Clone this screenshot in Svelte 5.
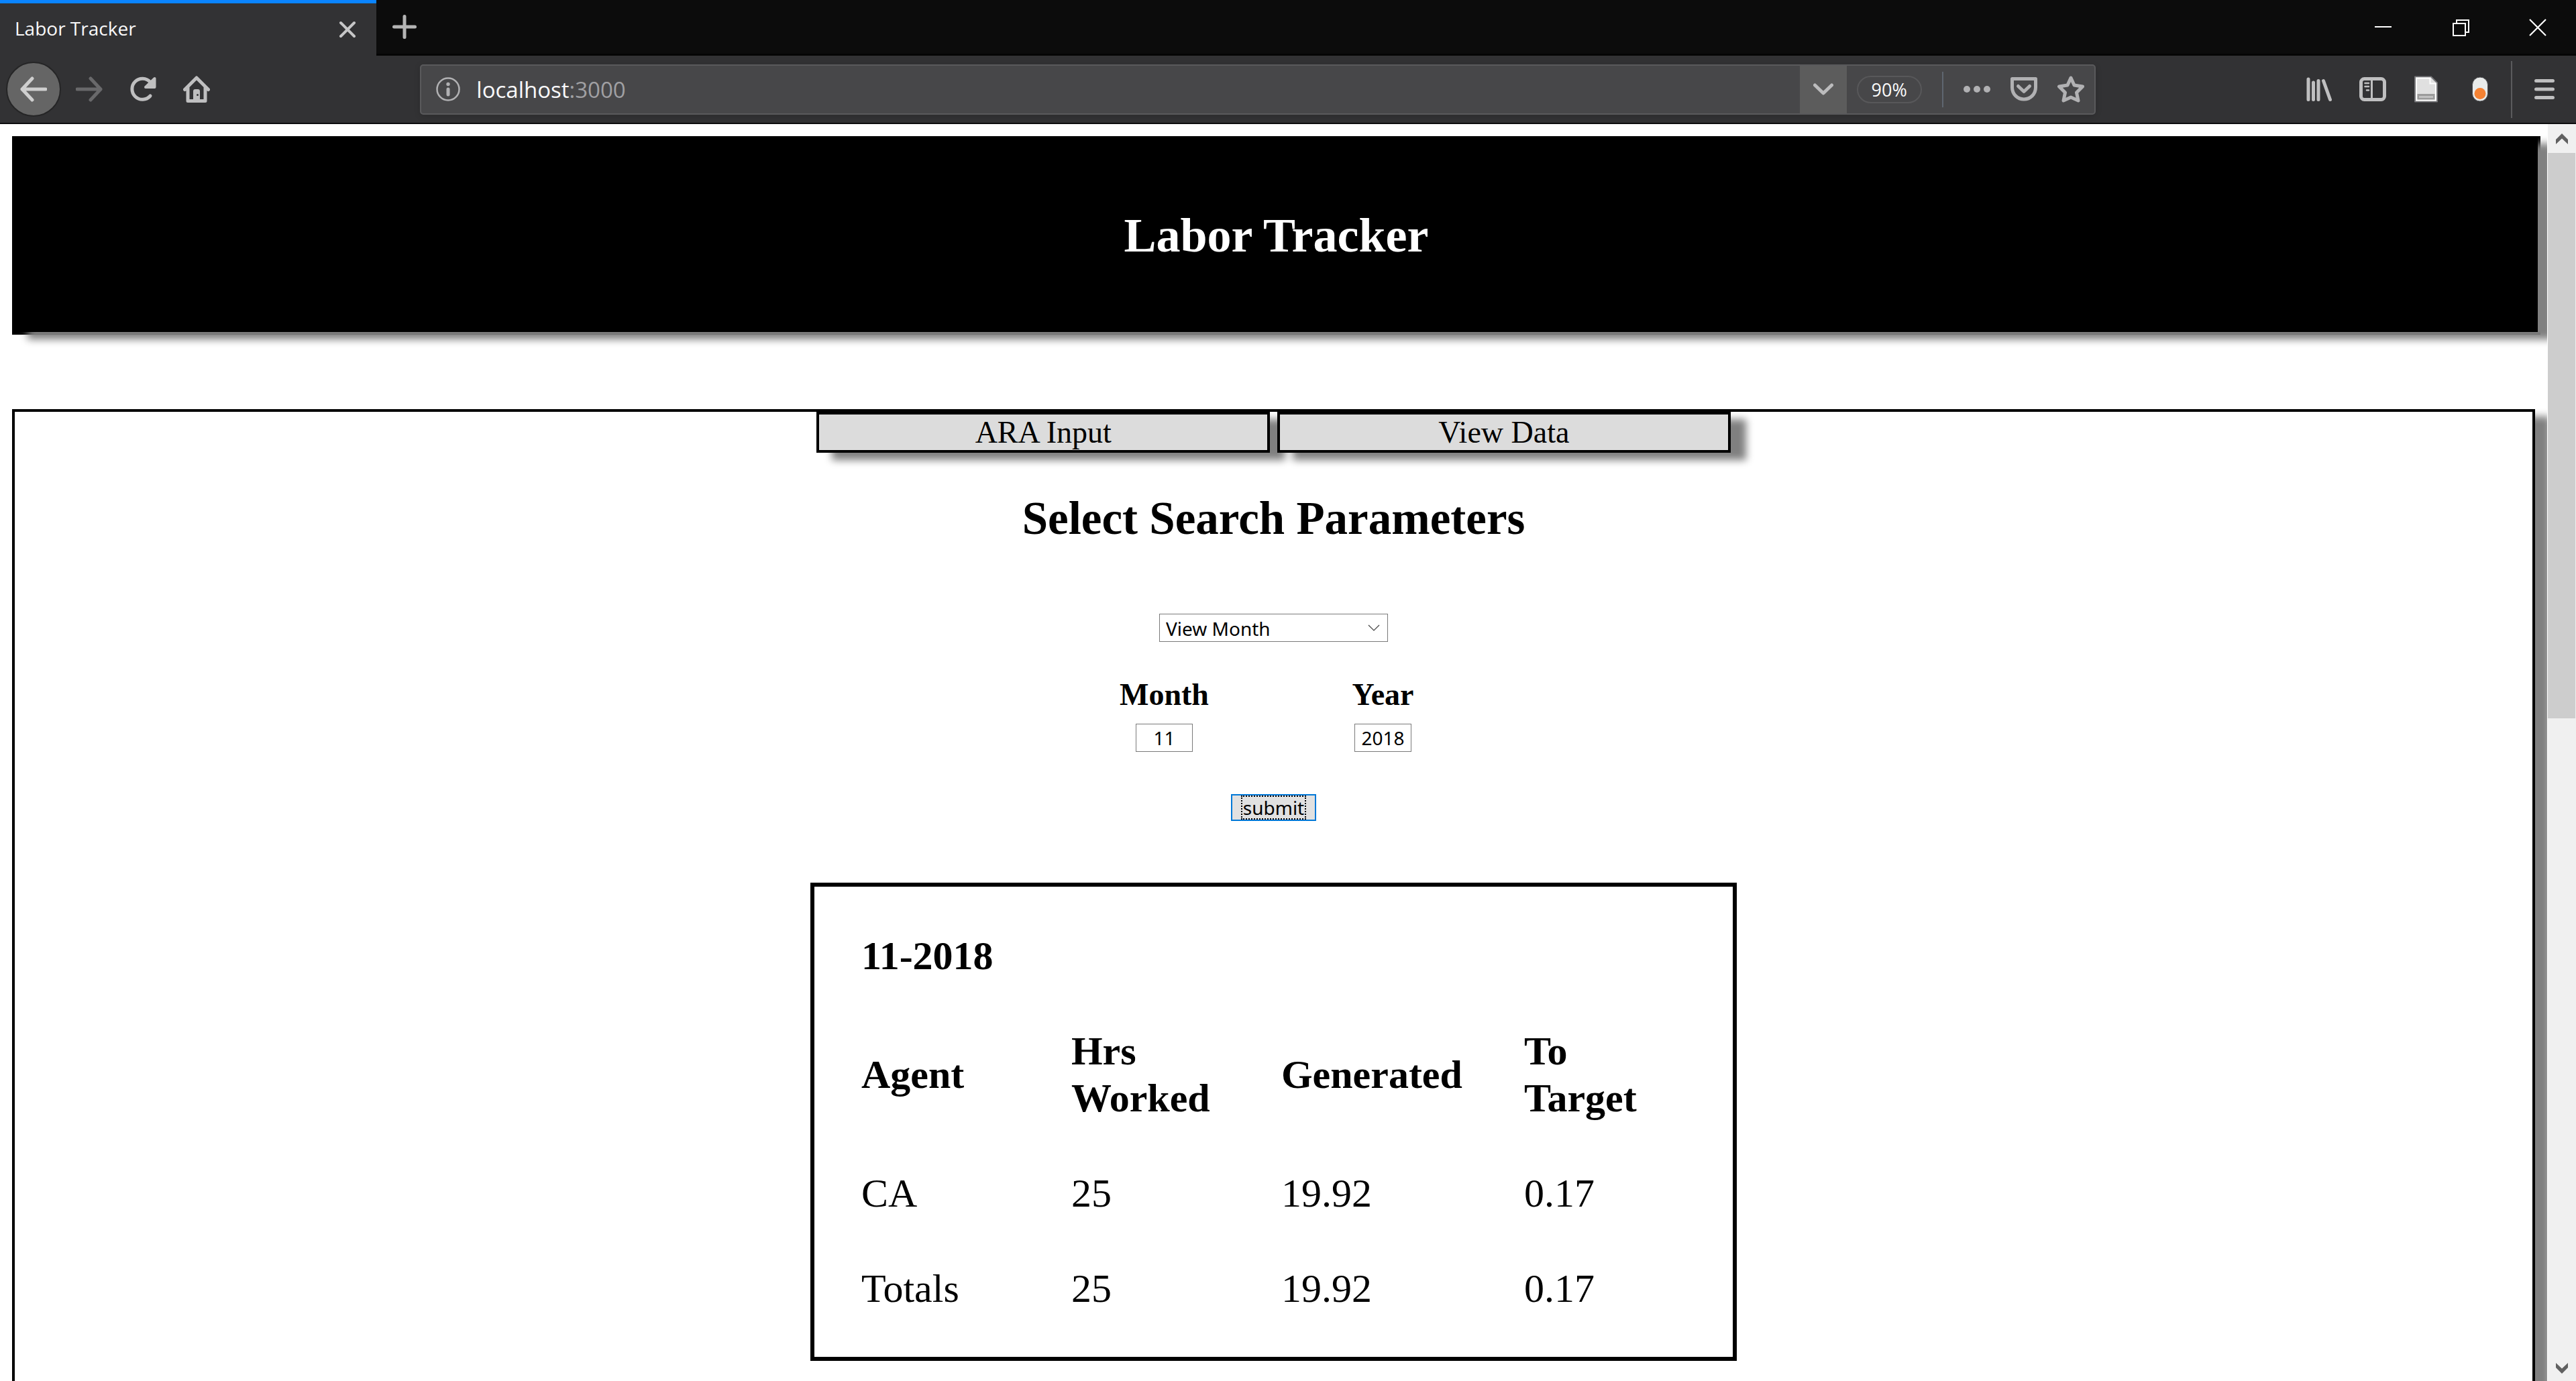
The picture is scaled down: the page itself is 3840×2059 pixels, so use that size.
<script>
  let mode = $state('month');
  let month = $state('11');
  let year = $state('2018');
  let address = $state('localhost:3000');

  const columns = ['Agent', 'Hrs Worked', 'Generated', 'To Target'];
  const rows = [
    ['CA', '25', '19.92', '0.17'],
    ['Totals', '25', '19.92', '0.17'],
  ];
</script>

<div class="browser">
  <div class="tabstrip">
    <div class="tab">
      <span>Labor Tracker</span>
      <button class="tab-close" aria-label="Close tab">
        <svg width="26" height="26" viewBox="0 0 26 26"><path d="M3 3L23 23M23 3L3 23" stroke="#c6c6c7" stroke-width="4" stroke-linecap="round" /></svg>
      </button>
    </div>
    <button class="new-tab" aria-label="New tab">
      <svg width="36" height="36" viewBox="0 0 36 36"><path d="M18 2.500V33.500M2.500 18H33.500" stroke="#b4b4b4" stroke-width="5" stroke-linecap="round" /></svg>
    </button>
    <div class="window-buttons">
      <button aria-label="Minimize"><svg width="26" height="26" viewBox="0 0 26 26"><path d="M0 12H25" stroke="#fff" stroke-width="2" /></svg></button>
      <button aria-label="Restore"><svg width="26" height="26" viewBox="0 0 26 26"><path d="M2 7H20V25H2ZM7 7V2H25V20H20" fill="none" stroke="#fff" stroke-width="2" /></svg></button>
      <button aria-label="Close"><svg width="26" height="26" viewBox="0 0 26 26"><path d="M1 1L25 25M25 1L1 25" stroke="#fff" stroke-width="2.200" /></svg></button>
    </div>
  </div>

  <div class="toolbar">
    <button class="back" aria-label="Back">
      <svg width="40" height="40" viewBox="0 0 40 40" fill="none" stroke="#cfcfcf" stroke-width="5" stroke-linecap="round" stroke-linejoin="round"><path d="M38 20H3M18 4L3 20L18 36" /></svg>
    </button>
    <button class="tool" aria-label="Forward">
      <svg width="40" height="40" viewBox="0 0 40 40" fill="none" stroke="#69696b" stroke-width="5" stroke-linecap="round" stroke-linejoin="round"><path d="M2 20H37M22 4L37 20L22 36" /></svg>
    </button>
    <button class="tool" aria-label="Reload">
      <svg width="40" height="40" viewBox="0 0 40 40" fill="none" stroke="#bfbfc0" stroke-width="5" stroke-linecap="round"><path d="M31 30A15.500 15.500 0 1 1 31 9.500" /><path d="M37.500 4V17H24Z" fill="#bfbfc0" stroke-width="4" stroke-linejoin="round" /></svg>
    </button>
    <button class="tool" aria-label="Home">
      <svg width="40" height="40" viewBox="0 0 40 40"><path d="M2.500 20.500L20 3L37.500 20.500M7 18V37.500H33V18" fill="none" stroke="#bfbfc0" stroke-width="5" stroke-linecap="round" stroke-linejoin="round" /><path d="M15 38V23Q15 20 18 20H22Q25 20 25 23V38Z" fill="#bfbfc0" /><circle cx="21.500" cy="28.500" r="1.500" fill="#323234" /></svg>
    </button>
    <div class="flex-space"></div>
    <div class="urlbar">
      <svg class="info" width="36" height="36" viewBox="0 0 36 36"><circle cx="18" cy="18" r="16.500" fill="none" stroke="#b1b1b3" stroke-width="2.500" /><circle cx="18" cy="10.500" r="2.700" fill="#b1b1b3" /><path d="M18 18V26" stroke="#b1b1b3" stroke-width="5" stroke-linecap="round" /></svg>
      <div class="address">
        <input aria-label="Address" bind:value={address} />
        <span class="address-text" aria-hidden="true">localhost<span>:3000</span></span>
      </div>
      <button class="history" aria-label="Show history">
        <svg width="30" height="18" viewBox="0 0 30 18"><path d="M2.500 3L15 15L27.500 3" fill="none" stroke="#bcbcbd" stroke-width="5" stroke-linecap="round" stroke-linejoin="round" /></svg>
      </button>
      <button class="zoom">90%</button>
      <i class="divider"></i>
      <button class="page-action" aria-label="Page actions">
        <svg width="40" height="40" viewBox="0 0 40 40" fill="#b1b1b3"><circle cx="5" cy="20" r="5" /><circle cx="20" cy="20" r="5" /><circle cx="35" cy="20" r="5" /></svg>
      </button>
      <button class="page-action" aria-label="Save to Pocket">
        <svg width="40" height="40" viewBox="0 0 40 40" fill="none" stroke="#b1b1b3" stroke-width="5" stroke-linecap="round" stroke-linejoin="round"><path d="M2.500 4.500H37.500V17.500A17.500 17.500 0 0 1 2.500 17.500Z" /><path d="M11.500 15.500L20 23.500L28.500 15.500" /></svg>
      </button>
      <button class="page-action" aria-label="Bookmark this page">
        <svg width="40" height="40" viewBox="0 0 40 40"><path d="M20 3L25 14L37.500 16L28.500 25L31 37L20 32L9 37L11.500 25L2.500 16L15 14Z" fill="none" stroke="#b1b1b3" stroke-width="5" stroke-linejoin="round" /></svg>
      </button>
    </div>
    <div class="flex-space"></div>
    <button class="tool" aria-label="Library">
      <svg width="40" height="40" viewBox="0 0 40 40" stroke="#bfbfc0" stroke-width="5" stroke-linecap="round"><path d="M4 5V35.500M11.500 10V35.500M19 7.500V35.500M26.500 7.500L36.500 35.500" /></svg>
    </button>
    <button class="tool" aria-label="Sidebars">
      <svg width="40" height="40" viewBox="0 0 40 40" fill="none" stroke="#bfbfc0"><rect x="2.500" y="4.500" width="35" height="31" rx="5" stroke-width="5" /><path d="M18.500 5V35" stroke-width="3" /><path d="M8.500 11H14M8.500 16H14M11 21.500H14" stroke-width="2.500" stroke-linecap="round" /></svg>
    </button>
    <button class="tool" aria-label="Page tools">
      <svg width="40" height="40" viewBox="0 0 40 40"><path d="M3 1.500H27L36 10.500V38.500H3Z" fill="#e0e0e0" stroke="#77777a" stroke-width="2" stroke-linejoin="round" /><path d="M5 3.500H25.500V11.500H34V36.500H5Z" fill="none" stroke="#fff" stroke-width="2" /><path d="M6.500 27H32.500V35.500H6.500Z" fill="#9b9b9b" /><path d="M9 31.500H30" stroke="#c8c8c8" stroke-width="2.500" /></svg>
    </button>
    <button class="tool" aria-label="Toggle extension">
      <svg width="40" height="40" viewBox="0 0 40 40"><rect x="8.500" y="2" width="23" height="36" rx="11.500" fill="#e9ebea" stroke="#4d4d50" stroke-width="1" /><circle cx="20" cy="26.500" r="8.500" fill="#f58233" /></svg>
    </button>
    <i class="menu-divider"></i>
    <button class="menu" aria-label="Open menu">
      <svg width="30" height="30" viewBox="0 0 30 30"><path d="M2.500 2.500H27.500M2.500 15H27.500M2.500 27.500H27.500" stroke="#bfbfc0" stroke-width="5" stroke-linecap="round" /></svg>
    </button>
  </div>

  <div class="viewport">
    <div class="page">
      <header><div class="banner"><h1>Labor Tracker</h1></div></header>
      <main>
        <nav>
          <button>ARA Input</button>
          <button>View Data</button>
        </nav>
        <h2>Select Search Parameters</h2>
        <form onsubmit={(e) => e.preventDefault()}>
          <div class="picker">
            <select aria-label="View" bind:value={mode}>
              <option value="month">View Month</option>
            </select>
            <svg width="18" height="10" viewBox="0 0 18 10"><path d="M1 1L9 9L17 1" fill="none" stroke="#444" stroke-width="1.200" /></svg>
          </div>
          <div class="fields">
            <label>Month<input bind:value={month} /></label>
            <label>Year<input bind:value={year} /></label>
          </div>
          <button class="submit"><span>submit</span></button>
        </form>
        <section class="results">
          <table>
            <caption>11-2018</caption>
            <colgroup><col class="narrow" /><col class="narrow" /><col class="wide" /><col /></colgroup>
            <thead>
              <tr>{#each columns as column}<th scope="col">{column}</th>{/each}</tr>
            </thead>
            <tbody>
              {#each rows as row}
                <tr>{#each row as cell}<td>{cell}</td>{/each}</tr>
              {/each}
            </tbody>
          </table>
        </section>
      </main>
    </div>
    <div class="scrollbar">
      <div class="arrow"><svg width="18" height="16" viewBox="0 0 18 16"><path d="M9 0L18 9V16L9 7.500L0 16V9Z" fill="#606060" /></svg></div>
      <div class="thumb"></div>
      <div class="track"></div>
      <div class="arrow down"><svg width="18" height="16" viewBox="0 0 18 16"><path d="M9 16L18 7V0L9 8.500L0 0V7Z" fill="#606060" /></svg></div>
    </div>
  </div>
</div>

<style>
  :global(body) { margin: 0; overflow: hidden; }
  * { box-sizing: border-box; }
  svg { display: block; flex: none; }
  button { margin: 0; padding: 0; border: 0; background: none; color: inherit; font: inherit; }
  .browser { height: 100vh; display: flex; flex-direction: column; overflow: hidden; background: #fff; font-family: "Open Sans", "Noto Sans", sans-serif; }

  .tabstrip { flex: none; height: 83px; display: flex; background: #0c0c0c; color: #f9f9fa; }
  .tab { width: 561px; padding: 0 30px 0 22px; display: flex; align-items: center; justify-content: space-between; border-top: 5px solid #0a84ff; background: #323234; font-size: 28px; }
  .tab span { padding-bottom: 4px; }
  .new-tab { width: 84px; display: grid; place-items: center; border-bottom: 3px solid #050505; }
  .window-buttons { flex: 1; display: flex; justify-content: flex-end; padding-top: 2px; border-bottom: 3px solid #050505; }
  .window-buttons button { width: 115px; display: grid; place-items: center; }

  .toolbar { flex: none; height: 102px; padding: 0 3px 0 9px; display: flex; align-items: center; background: #323234; border-bottom: 2px solid #0c0c0d; }
  .back { width: 82px; height: 82px; margin-right: 2px; display: grid; place-items: center; border: 2px solid #252526; border-radius: 50%; background: #656565; }
  .tool { width: 80px; height: 80px; display: grid; place-items: center; }
  .flex-space { flex: 2; }
  .urlbar { flex: 17; height: 75px; display: flex; align-items: center; border: 2px solid #5a5a5c; border-radius: 5px; background: #474749; box-shadow: 0 2px 10px rgba(0, 0, 0, 0.15); }
  .info { margin-left: 22px; }
  .address { flex: 1; display: grid; margin-left: 24px; padding-top: 2px; font-size: 33px; line-height: 44px; }
  .address input, .address-text { grid-area: 1 / 1; }
  .address input { width: 100%; padding: 0; border: 0; outline: 0; background: none; color: transparent; font: inherit; }
  .address-text { pointer-events: none; color: #f9f9fa; }
  .address-text span { color: #a0a0a3; }
  .history { width: 70px; height: 71px; display: grid; place-items: center; background: #5c5c5c; }
  .zoom { width: 97px; height: 41px; margin-left: 15px; border: 2px solid #58585a; border-radius: 21px; color: #f9f9fa; font-size: 27px; line-height: 38px; }
  .divider { width: 2px; height: 53px; margin: 0 15px 0 30px; background: #5f6670; }
  .page-action { width: 70px; height: 70px; display: grid; place-items: center; }
  .menu-divider { width: 2px; height: 85px; margin: 0 4px 0 6px; background: #5b5b5d; }
  .menu { width: 88px; height: 80px; display: grid; place-items: center; }

  .viewport { flex: 1; min-height: 0; display: flex; }
  .page { flex: 1; min-width: 0; padding: 18px 18px 0; overflow: hidden; margin-right: 1px; font-family: "Liberation Serif", serif; color: #000; }
  header { margin-right: -8px; padding: 0 4px 4px 0; background: #000; }
  .banner { padding: 108px 0 104px 4px; background: #000; box-shadow: 23px 11px 11px #808080; color: #fff; }
  h1 { margin: 0; font-size: 72px; line-height: 80px; text-align: center; }
  main { margin-top: 111px; padding-bottom: 140px; border: 4px solid #000; box-shadow: 23px 11px 11px #808080; }
  nav { display: flex; justify-content: center; gap: 11px; }
  nav button { width: 18%; border: 4px solid #000; background: #dcdcdc; box-shadow: 23px 11px 11px #808080; font-size: 46px; line-height: 53px; }
  h2 { margin: 58px 0 102px; font-size: 69px; line-height: 80px; text-align: center; }

  form { display: flex; flex-direction: column; align-items: center; font-size: 28px; }
  .picker { display: grid; align-items: center; width: 341px; }
  .picker select, .picker svg { grid-area: 1 / 1; }
  .picker svg { justify-self: end; margin-right: 12px; pointer-events: none; }
  select, input { height: 42px; border: 1px solid #7a7a7a; border-radius: 0; background: #fff; color: #000; font-family: "Noto Sans", sans-serif; font-size: 28px; font-weight: 400; }
  select { width: 100%; appearance: none; padding: 2px 9px 0; line-height: 38px; }
  .fields { margin: 52px 0 63px; display: grid; grid-template-columns: 326px 326px; }
  .fields label { display: flex; flex-direction: column; align-items: center; gap: 17px; font-size: 46px; line-height: 53px; font-weight: 700; }
  .fields input { width: 85px; padding: 0; text-align: center; }
  .submit { height: 40px; padding: 0 13px; border: 2px solid #0078d7; background: #e1e1e1; font-family: "Noto Sans", sans-serif; line-height: 32px; }
  .submit span { display: flex; justify-content: center; width: 97px; border: 2px dotted #000; }

  .results { width: 36.8%; margin: 92px auto 0; padding: 32px 70px 31px; border: 6px solid #000; }
  table { width: 100%; table-layout: fixed; border-collapse: collapse; font-size: 60px; line-height: 70px; text-align: left; }
  .narrow { width: 313px; }
  .wide { width: 362px; }
  caption { padding: 36px 0; font-weight: 700; text-align: left; }
  th, td { padding: 36px 0; vertical-align: middle; }

  .scrollbar { width: 42px; display: flex; flex-direction: column; background: #f0f0f0; }
  .arrow { height: 43px; display: grid; place-items: center; }
  .down { height: 38px; }
  .thumb { flex: 47; margin-right: 1px; background: #cdcdcd; }
  .track { flex: 53; }
</style>
